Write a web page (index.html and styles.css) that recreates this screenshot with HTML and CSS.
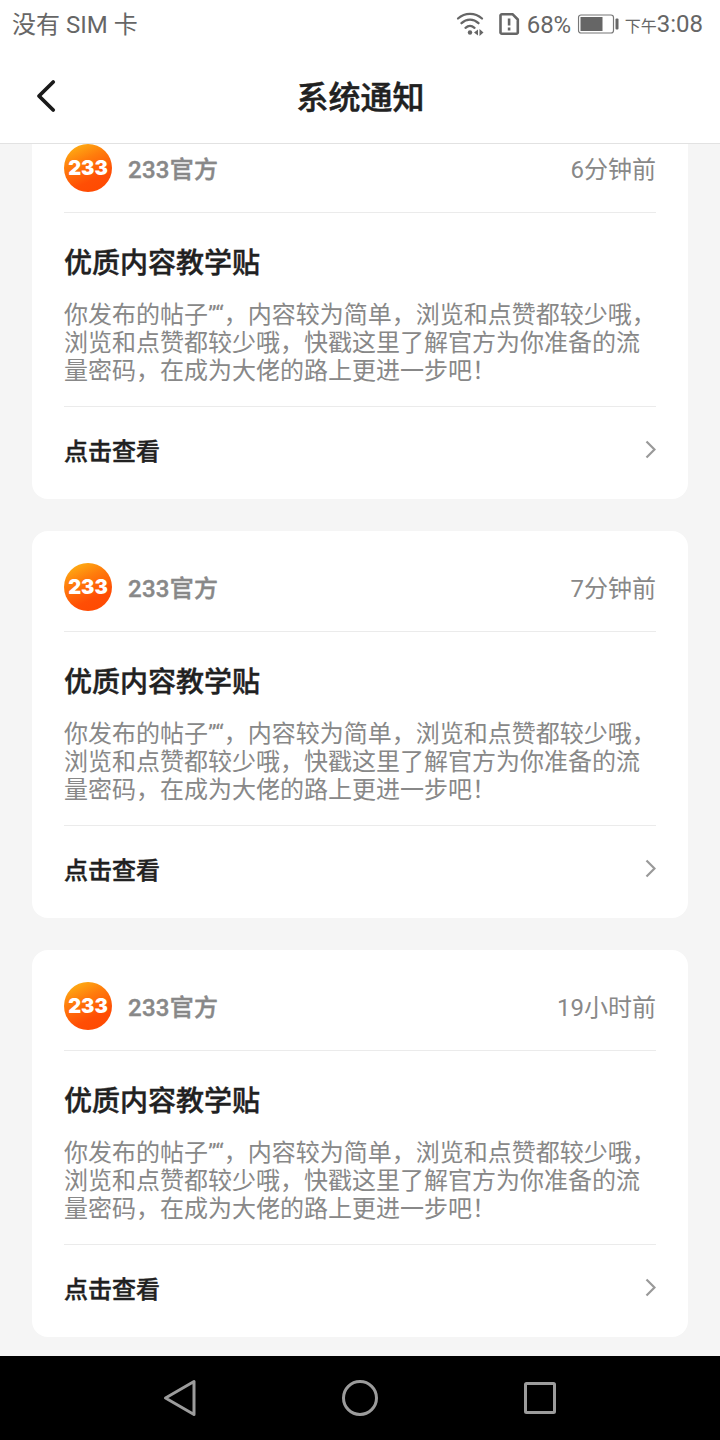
FILE: index.html
```html
<!DOCTYPE html>
<html lang="zh-CN">
<head>
<meta charset="utf-8">
<meta name="viewport" content="width=device-width">
<title>系统通知</title>
<link rel="stylesheet" href="styles.css">
</head>
<body>
<div class="screen">
  <div class="statusbar">
    <span class="carrier">没有 SIM 卡</span>
    <div class="indicators">
      <svg class="wifi" width="28" height="24" viewBox="0 0 28 24" fill="none" stroke="#666" stroke-width="2.300" stroke-linecap="round">
        <path d="M1.500 6.500C8.500 .3 18.500 .3 25.500 6.500M5 11.200c5-4.700 12-4.700 17 0M9 15.800c3-2.600 6-2.600 9 0"/>
        <circle cx="13.500" cy="20.500" r="2.200" fill="#666" stroke="none"/>
        <path d="M17.500 20.500l4-3v6zM27 20.500L23 17v7z" fill="#666" stroke="none"/>
      </svg>
      <svg class="sim" width="22" height="24" viewBox="0 0 22 24" fill="none" stroke="#666" stroke-width="2.600">
        <path d="M3.500 2.200h10.500l5.300 5.300V20a1.500 1.500 0 0 1-1.500 1.800H3.500A1.500 1.500 0 0 1 2 20V4A1.500 1.500 0 0 1 3.500 2.200z" stroke-linejoin="round"/>
        <path d="M10.600 6.500v7M10.600 15.600v3" stroke-width="2.600"/>
      </svg>
      <span class="percent">68%</span>
      <svg class="battery" width="42" height="20" viewBox="0 0 42 20">
        <rect x="1" y="1" width="35" height="18" rx="2.500" fill="none" stroke="#777" stroke-width="1.200"/>
        <rect x="3" y="3" width="22" height="14" fill="#666"/>
        <rect x="38" y="4.500" width="3" height="11" rx="1" fill="#666"/>
      </svg>
      <span class="time"><small class="period">下午</small>3:08</span>
    </div>
  </div>

  <header class="topbar">
    <svg class="back" width="22" height="34" viewBox="0 0 22 34" fill="none" stroke="#1a1a1a" stroke-width="3.800" stroke-linecap="round" stroke-linejoin="round"><path d="M18.200 3L4 17l14.200 14"/></svg>
    <h1 class="title">系统通知</h1>
  </header>

  <main class="feed">
    <article class="card first">
      <div class="card-head"><span class="avatar"><b class="mark">233</b></span><span class="name">233官方</span><span class="ago">6分钟前</span></div>
      <div class="card-body">
        <h2 class="subject">优质内容教学贴</h2>
        <p class="message">你发布的帖子”“，内容较为简单，浏览和点赞都较少哦，<br>浏览和点赞都较少哦，快戳这里了解官方为你准备的流<br>量密码，在成为大佬的路上更进一步吧！</p>
      </div>
      <div class="card-foot"><span>点击查看</span><svg width="12" height="20" viewBox="0 0 12 20" fill="none" stroke="#999" stroke-width="2.200"><path d="M2.500 1.500l8 8-8 8"/></svg></div>
    </article>
    <article class="card">
      <div class="card-head"><span class="avatar"><b class="mark">233</b></span><span class="name">233官方</span><span class="ago">7分钟前</span></div>
      <div class="card-body">
        <h2 class="subject">优质内容教学贴</h2>
        <p class="message">你发布的帖子”“，内容较为简单，浏览和点赞都较少哦，<br>浏览和点赞都较少哦，快戳这里了解官方为你准备的流<br>量密码，在成为大佬的路上更进一步吧！</p>
      </div>
      <div class="card-foot"><span>点击查看</span><svg width="12" height="20" viewBox="0 0 12 20" fill="none" stroke="#999" stroke-width="2.200"><path d="M2.500 1.500l8 8-8 8"/></svg></div>
    </article>
    <article class="card">
      <div class="card-head"><span class="avatar"><b class="mark">233</b></span><span class="name">233官方</span><span class="ago">19小时前</span></div>
      <div class="card-body">
        <h2 class="subject">优质内容教学贴</h2>
        <p class="message">你发布的帖子”“，内容较为简单，浏览和点赞都较少哦，<br>浏览和点赞都较少哦，快戳这里了解官方为你准备的流<br>量密码，在成为大佬的路上更进一步吧！</p>
      </div>
      <div class="card-foot"><span>点击查看</span><svg width="12" height="20" viewBox="0 0 12 20" fill="none" stroke="#999" stroke-width="2.200"><path d="M2.500 1.500l8 8-8 8"/></svg></div>
    </article>
  </main>

  <nav class="navbar">
    <svg width="40" height="40" viewBox="0 0 40 40"><path d="M5.500 20L34 3.500v33z"/></svg>
    <svg width="40" height="40" viewBox="0 0 40 40"><circle cx="20" cy="20" r="16.500"/></svg>
    <svg width="40" height="40" viewBox="0 0 40 40"><rect x="5.500" y="5.500" width="29" height="29" rx="1"/></svg>
  </nav>
</div>
</body>
</html>
```

FILE: styles.css
```css
* { box-sizing: border-box; }
body {
  margin: 0;
  font-family: Roboto, "Noto Sans CJK SC", sans-serif;
  font-size: 24px;
  color: #212121;
}
h1, h2, p { margin: 0; }
svg { display: block; flex: none; }

.screen {
  width: 720px;
  height: 1440px;
  display: flex;
  flex-direction: column;
  overflow: hidden;
  background: #f5f5f5;
}

.statusbar {
  flex: none;
  height: 48px;
  padding: 0 17px 0 12px;
  display: flex;
  align-items: center;
  justify-content: space-between;
  background: #fff;
  color: #666;
  line-height: 46px;
  white-space: nowrap;
}
.carrier, .percent, .time { padding-top: 2px; }
.indicators { display: flex; align-items: center; }
.wifi { margin-right: 14px; }
.sim { margin-right: 6px; }
.battery { margin: 0 7px 0 6px; }
.percent, .battery, .sim, .wifi { transform: translateX(1.5px); }
.period { font-size: 16px; }

.topbar {
  flex: none;
  height: 96px;
  padding: 0 35px;
  display: grid;
  grid-template-columns: 22px 1fr 22px;
  align-items: center;
  background: #fff;
  border-bottom: 1px solid #e2e2e2;
}
.title {
  padding: 4px 0 0 1px;
  font-size: 32px;
  font-weight: 500;
  line-height: 48px;
  text-align: center;
  -webkit-text-stroke: 0.5px;
}

.feed {
  flex: 1;
  min-height: 0;
  overflow: hidden;
  padding: 0 32px;
  display: flex;
  flex-direction: column;
  gap: 32px;
}
.card {
  flex: none;
  height: 387px;
  padding: 0 32px;
  background: #fff;
  border-radius: 16px;
}
/* the list is scrolled, so the first card starts behind the top bar */
.first { margin-top: -32px; }

.card-head {
  height: 101px;
  padding: 32px 0 20px;
  display: flex;
  align-items: center;
  border-bottom: 1px solid #ebebeb;
  color: #888;
}
.avatar {
  width: 48px;
  height: 48px;
  border-radius: 50%;
  display: flex;
  align-items: center;
  justify-content: center;
  background: linear-gradient(155deg, #fdb515 5%, #ff7d0c 35%, #ff4e05 70%, #ff4800);
}
.mark {
  font: 900 20px/48px Inter, sans-serif;
  color: #fff;
}
.name, .ago { padding-bottom: 2px; }
.name { margin-left: 16px; font-weight: 500; -webkit-text-stroke: 0.4px; letter-spacing: 0.25px; }
.ago { margin-left: auto; }

.card-body {
  height: 194px;
  padding-top: 31px;
  border-bottom: 1px solid #ebebeb;
}
.subject {
  font-size: 28px;
  font-weight: 500;
  line-height: 40px;
  -webkit-text-stroke: 0.4px;
}
.message {
  margin-top: 17px;
  line-height: 28px;
  color: #888;
  white-space: nowrap;
}

.card-foot {
  height: 86px;
  display: flex;
  align-items: center;
  justify-content: space-between;
  font-weight: 500;
  -webkit-text-stroke: 0.4px;
}
.card-foot span { padding-bottom: 1px; }

.navbar {
  flex: none;
  height: 84px;
  padding: 0 90px;
  display: grid;
  grid-template-columns: repeat(3, 1fr);
  place-items: center;
  background: #000;
}
.navbar svg {
  fill: none;
  stroke: #9c9c9c;
  stroke-width: 3;
  stroke-linejoin: round;
}
```
